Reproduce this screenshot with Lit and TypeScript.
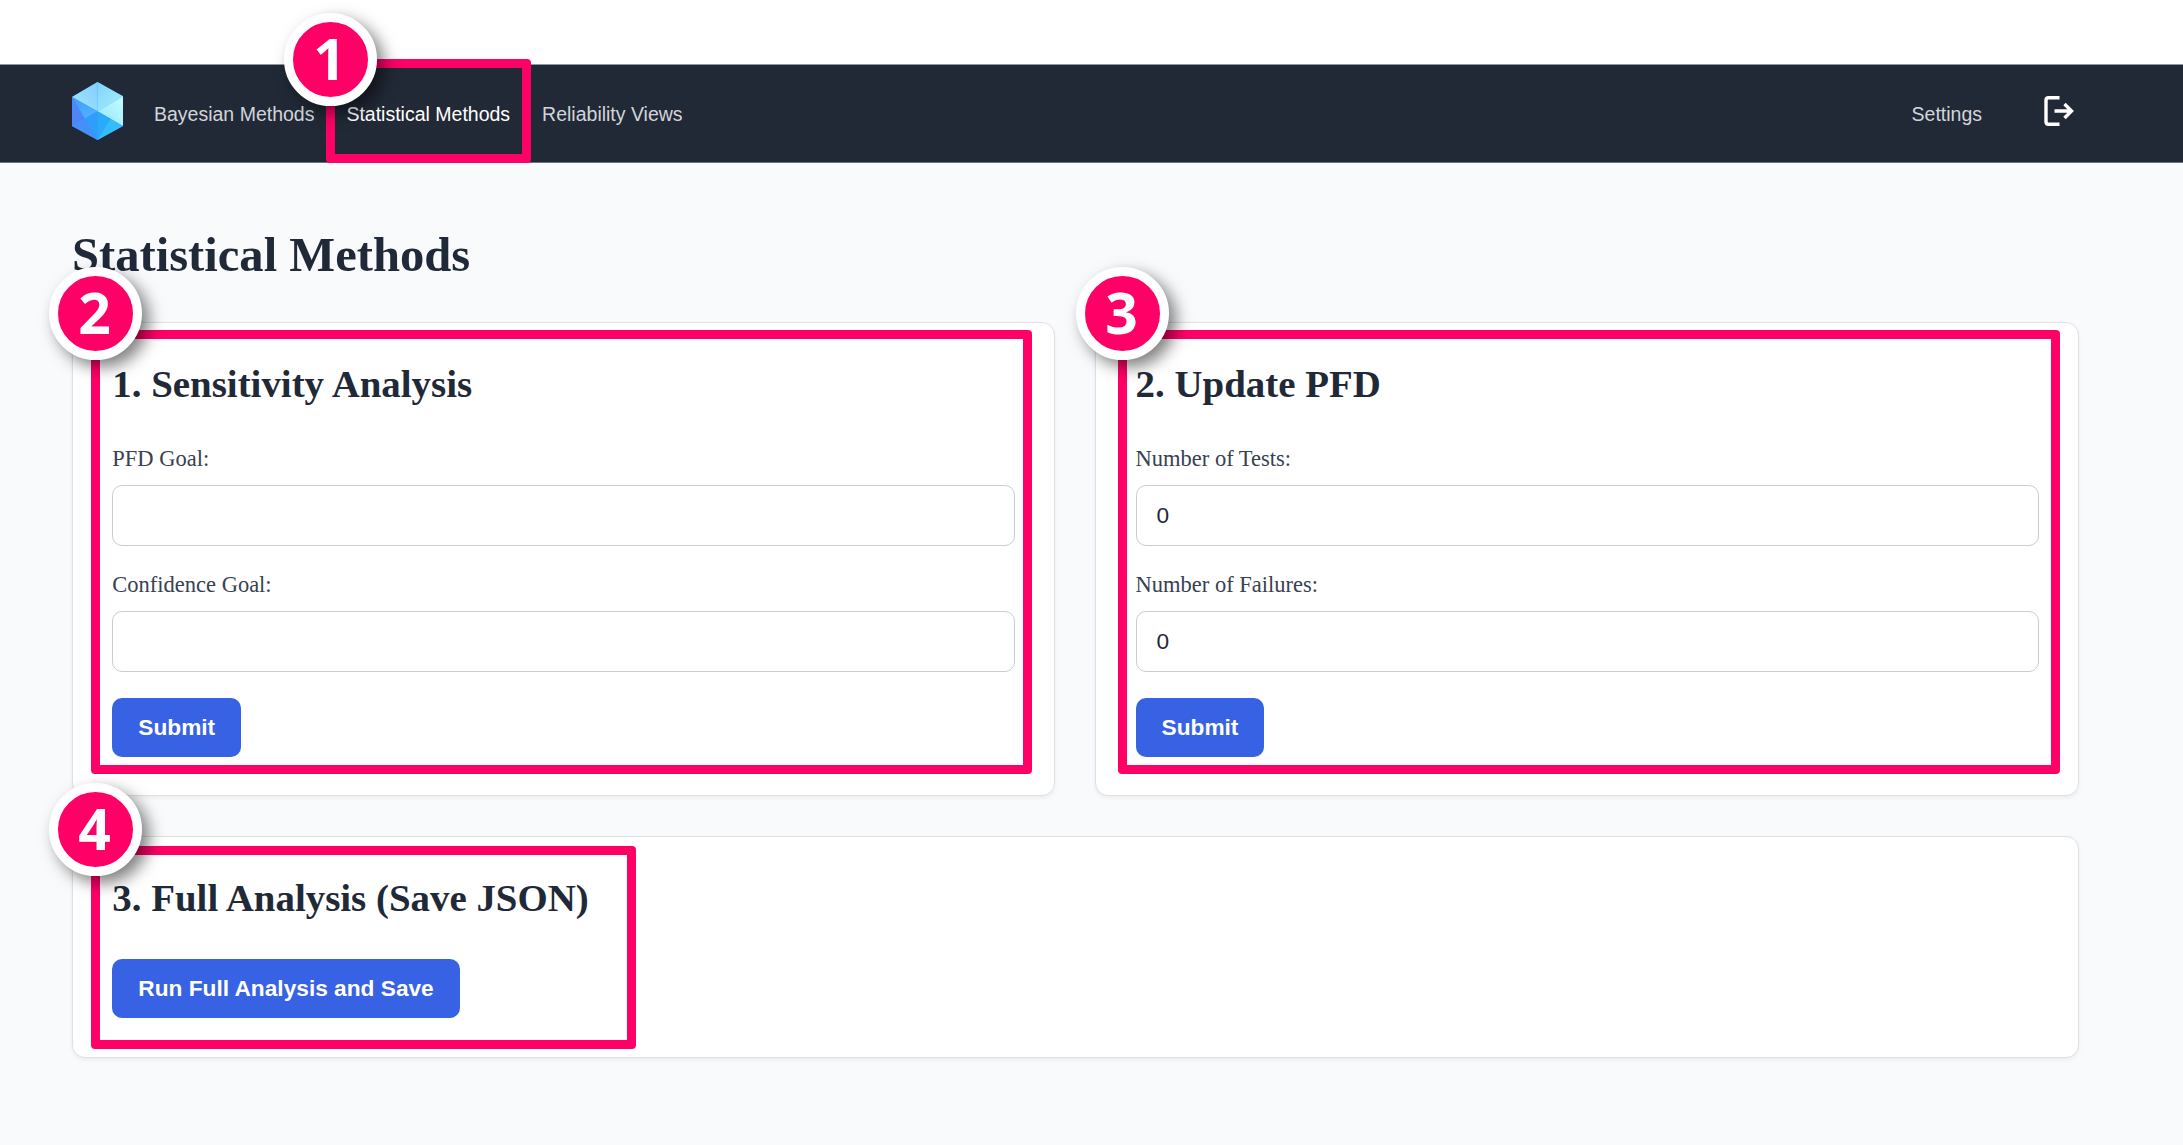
import { LitElement, html, css, svg } from "lit";
import { customElement, property } from "lit/decorators.js";

@customElement("brand-logo")
class BrandLogo extends LitElement {
  static styles = css`
    :host { display: block; width: 51px; height: 58px; margin-bottom: 6px; }
    svg { display: block; }
  `;
  render() {
    return html`<svg width="51" height="58" viewBox="0 0 150 174" preserveAspectRatio="none">
      <defs>
        <linearGradient id="a" x1="1" y1="0" x2="0" y2="1"><stop offset="0" stop-color="#80d0fb"/><stop offset="1" stop-color="#a4e4fd"/></linearGradient>
        <linearGradient id="b" x1="0" y1="0" x2="1" y2="1"><stop offset="0" stop-color="#82d3fa"/><stop offset="1" stop-color="#a8effd"/></linearGradient>
        <linearGradient id="c" x1="0" y1="1" x2="1" y2="0"><stop offset="0" stop-color="#93e6fd"/><stop offset="1" stop-color="#c2fdff"/></linearGradient>
        <linearGradient id="d" x1="0" y1="0" x2="1" y2="1"><stop offset="0" stop-color="#4a8df8"/><stop offset="1" stop-color="#3d92fa"/></linearGradient>
        <linearGradient id="e" x1="0" y1="0" x2="1" y2="1"><stop offset="0" stop-color="#3c9dfb"/><stop offset="1" stop-color="#55b4fd"/></linearGradient>
      </defs>
      <polygon points="75,0 150,43 150,132 75,174 0,132 0,45" fill="#2f97fa"/>
      <polygon points="0,45 75,0 75,88" fill="url(#a)"/>
      <polygon points="75,0 150,43 75,88" fill="url(#b)"/>
      <polygon points="150,43 150,132 75,88" fill="url(#c)"/>
      <polygon points="0,45 75,88 38,110" fill="url(#e)"/>
      <polygon points="75,88 75,174 38,110" fill="#309dfb"/>
      <polygon points="0,45 38,110 0,132" fill="#4d86f6"/>
      <polygon points="0,132 38,110 75,174" fill="url(#d)"/>
      <polygon points="75,88 113,110 75,174" fill="#2ba9fb"/>
      <polygon points="75,88 150,132 113,110" fill="#3cc4fc"/>
      <polygon points="113,110 150,132 75,174" fill="#33bdfa"/>
    </svg>`;
  }
}

@customElement("form-field")
class FormField extends LitElement {
  @property() label = "";
  @property() value = "";
  static styles = css`
    :host { display: block; }
    .label { display: block; box-sizing: border-box; height: 34px; margin-bottom: 10px; padding-top: 1px; font: 22.5px/34px "Liberation Serif", serif; color: #374151; }
    .input { display: block; box-sizing: border-box; width: 100%; height: 61px; padding: 0 20px 1px; border: 1px solid #c8ccd3; border-radius: 10px; background: #fff; color: #1f2937; font: 22.7px "Liberation Sans", sans-serif; outline: none; }
  `;
  render() {
    return html`<label class="label" for="f">${this.label}</label><input id="f" class="input" .value=${this.value} />`;
  }
}

@customElement("callout-mark")
class CalloutMark extends LitElement {
  @property({ type: Number }) number = 1;
  @property({ type: Number }) x = 0;
  @property({ type: Number }) y = 0;
  @property({ type: Number }) w = 0;
  @property({ type: Number }) h = 0;
  @property({ type: Number }) bx = 0;
  @property({ type: Number }) by = 0;
  static styles = css`
    :host { display: block; pointer-events: none; }
    .frame { position: absolute; box-sizing: border-box; border: 9px solid #ff0066; border-radius: 4px; }
    .badge { position: absolute; box-sizing: border-box; width: 93px; height: 93px; padding-right: 2px; border-radius: 50%; border: 9px solid #fff; background: #ff0066; color: #fff; font: 700 57px/73px "Open Sans", sans-serif; text-align: center; box-shadow: 7px 7px 16px rgba(0, 0, 0, 0.5); }
  `;
  render() {
    return html`
      <div class="frame" style="left:${this.x}px;top:${this.y}px;width:${this.w}px;height:${this.h}px"></div>
      <div class="badge" style="left:${this.bx}px;top:${this.by}px">${this.number}</div>
    `;
  }
}

const marks = [
  { n: 1, x: 326, y: 59, w: 205, h: 104, bx: 284, by: 13 },
  { n: 2, x: 91, y: 330, w: 941, h: 444, bx: 49, by: 267 },
  { n: 3, x: 1118, y: 330, w: 942, h: 444, bx: 1076, by: 267 },
  { n: 4, x: 91, y: 846, w: 545, h: 203, bx: 49, by: 783 },
];

const logoutIcon = svg`
  <path d="M15.500 1.700H4.500Q2 1.700 2 4.200V25.800Q2 28.300 4.500 28.300H15.500" />
  <path d="M10.500 15H27.500M20.500 8L27.500 15L20.500 22" />
`;

@customElement("app-root")
class AppRoot extends LitElement {
  static styles = css`
    :host { display: block; position: relative; width: 100%; height: 1145px; overflow: hidden; background: #f9fafc; font-family: "Liberation Serif", serif; color: #1f2937; }
    .strip { height: 64px; background: #fff; }
    .bar { display: flex; align-items: center; box-sizing: border-box; height: 99px; padding: 0 109px 0 71.5px; background: #212936; border-top: 1px solid #92969a; border-bottom: 1px solid #6d707c; }
    .nav { display: flex; flex: 1; gap: 32px; margin-left: 31.5px; }
    .link { font: 19.5px/28px "Liberation Sans", sans-serif; color: #d1d5db; white-space: nowrap; }
    .active { color: #fff; }
    .logout { width: 30px; height: 30px; margin-left: 62px; margin-top: -5px; fill: none; stroke: #fff; stroke-width: 3.4; }
    .main { padding: 62px 104.5px 0 72px; }
    .title { margin: 0 0 37px; font-size: 48.6px; line-height: 60px; font-weight: 700; }
    .grid { display: grid; grid-template-columns: 1fr 1fr; gap: 40px; }
    .card { box-sizing: border-box; padding: 36px 39px 38px 39.3px; background: #fff; border: 1px solid #dfe1e7; border-radius: 13px; box-shadow: 0 2px 4px rgba(0, 0, 0, 0.06); }
    .wide { grid-column: span 2; padding-bottom: 39px; }
    .heading { margin: 0 0 32px; font-size: 38.9px; line-height: 50px; font-weight: 700; }
    .wide .heading { margin-bottom: 36px; }
    .fields { display: grid; gap: 21px; margin-bottom: 26px; }
    .button { display: block; height: 59px; padding: 0 26px 1px; border: 0; border-radius: 10px; background: #3762e3; color: #fff; font: 700 22.7px "Liberation Sans", sans-serif; }
  `;
  render() {
    return html`
      <div class="strip"></div>
      <header class="bar">
        <brand-logo></brand-logo>
        <nav class="nav">
          <span class="link">Bayesian Methods</span>
          <span class="link active">Statistical Methods</span>
          <span class="link">Reliability Views</span>
        </nav>
        <span class="link">Settings</span>
        <svg class="logout" viewBox="0 0 30 30">${logoutIcon}</svg>
      </header>
      <main class="main">
        <h1 class="title">Statistical Methods</h1>
        <div class="grid">
          <section class="card">
            <h2 class="heading">1. Sensitivity Analysis</h2>
            <div class="fields">
              <form-field label="PFD Goal:"></form-field>
              <form-field label="Confidence Goal:"></form-field>
            </div>
            <button class="button">Submit</button>
          </section>
          <section class="card">
            <h2 class="heading">2. Update PFD</h2>
            <div class="fields">
              <form-field label="Number of Tests:" value="0"></form-field>
              <form-field label="Number of Failures:" value="0"></form-field>
            </div>
            <button class="button">Submit</button>
          </section>
          <section class="card wide">
            <h2 class="heading">3. Full Analysis (Save JSON)</h2>
            <button class="button">Run Full Analysis and Save</button>
          </section>
        </div>
      </main>
      ${marks.map((m) => html`<callout-mark .number=${m.n} .x=${m.x} .y=${m.y} .w=${m.w} .h=${m.h} .bx=${m.bx} .by=${m.by}></callout-mark>`)}
    `;
  }
}
